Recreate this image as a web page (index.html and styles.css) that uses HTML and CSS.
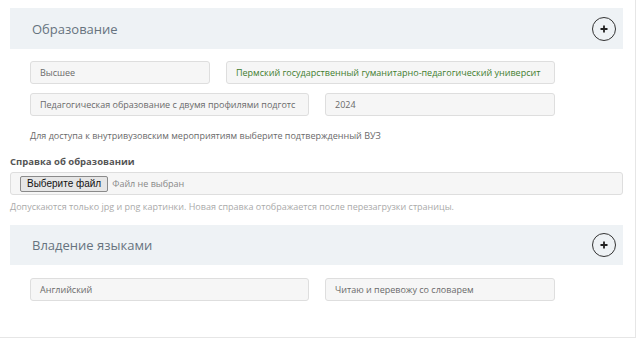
FILE: index.html
```html
<!DOCTYPE html>
<html lang="ru">
<head>
<meta charset="utf-8">
<link rel="stylesheet" href="styles.css">
</head>
<body>
<div class="page">
  <section class="block">
    <div class="block-head">
      <span class="block-title">Образование</span>
      <span class="plus-btn"><svg width="10" height="10" viewBox="0 0 10 10"><path d="M5 1.5v7M1.5 5h7" stroke="#222" stroke-width="1.8"/></svg></span>
    </div>
    <div class="fields">
      <div class="row">
        <div class="field w180">Высшее</div>
        <div class="field w329 green">Пермский государственный гуманитарно-педагогический университ</div>
      </div>
      <div class="row">
        <div class="field w279">Педагогическая образование с двумя профилями подготс</div>
        <div class="field w230">2024</div>
      </div>
      <p class="note">Для доступа к внутривузовским мероприятиям выберите подтвержденный ВУЗ</p>
    </div>
  </section>

  <div class="upload">
    <div class="upload-label">Справка об образовании</div>
    <div class="file-box">
      <span class="file-btn">Выберите файл</span>
      <span class="file-name">Файл не выбран</span>
    </div>
    <div class="help">Допускаются только jpg и png картинки. Новая справка отображается после перезагрузки страницы.</div>
  </div>

  <section class="block lang">
    <div class="block-head">
      <span class="block-title">Владение языками</span>
      <span class="plus-btn"><svg width="10" height="10" viewBox="0 0 10 10"><path d="M5 1.5v7M1.5 5h7" stroke="#222" stroke-width="1.8"/></svg></span>
    </div>
    <div class="fields">
      <div class="row">
        <div class="field w279">Английский</div>
        <div class="field w230">Читаю и перевожу со словарем</div>
      </div>
    </div>
  </section>
</div>
</body>
</html>
```
FILE: styles.css
```css
* { box-sizing: border-box; }
html, body { margin: 0; padding: 0; background: #fff; }
body { font-family: "Open Sans", "Noto Sans", sans-serif; color: #555; }

.page {
  width: 636px;
  height: 338px;
  border-right: 1px solid #e6e6e6;
  border-bottom: 1px solid #e6e6e6;
  padding: 8px 0 0 10px;
}

.block-head {
  width: 613px;
  height: 41px;
  background: #eef2f5;
  display: flex;
  align-items: center;
  justify-content: space-between;
  padding: 0 7px 0 22px;
}
.block-title {
  font-size: 13px;
  color: #66737e;
}
.plus-btn {
  width: 24px;
  height: 24px;
  border: 1.3px solid #333;
  border-radius: 50%;
  display: flex;
  align-items: center;
  justify-content: center;
}

.fields { padding: 12px 0 0 20px; }
.row { display: flex; gap: 16px; margin-bottom: 9px; }
.field {
  height: 23px;
  border: 1px solid #dedede;
  border-radius: 3px;
  background: #f6f6f6;
  font-size: 9px;
  line-height: 21px;
  padding: 0 9px;
  color: #6a6a6a;
  white-space: nowrap;
  overflow: hidden;
}
.field.green { color: #3f7d2f; }
.w180 { width: 180px; }
.w329 { width: 329px; }
.w279 { width: 279px; }
.w230 { width: 230px; }

.note {
  margin: 14px 0 0;
  font-size: 9px;
  line-height: 12px;
  color: #6a6a6a;
}

.upload { padding-top: 14px; }
.upload-label {
  font-size: 9.5px;
  font-weight: 700;
  line-height: 12px;
  color: #555;
}
.file-box {
  margin-top: 4px;
  width: 613px;
  height: 23px;
  border: 1px solid #dedede;
  border-radius: 3px;
  background: #f6f6f6;
  display: flex;
  align-items: center;
  padding-left: 9px;
  gap: 4px;
}
.file-btn {
  font-family: "Liberation Sans", Arial, sans-serif;
  font-size: 10px;
  color: #111;
  background: #e6e6e6;
  border: 1px solid #8a8a8a;
  border-radius: 2px;
  height: 16px;
  line-height: 14px;
  padding: 0 6px;
}
.file-name { font-size: 9px; color: #888; }
.help {
  margin-top: 6px;
  font-size: 9px;
  line-height: 12px;
  color: #aaa;
}

.lang { margin-top: 12px; }
.lang .block-head { height: 40px; }
.lang .fields { padding-top: 13px; }
```
